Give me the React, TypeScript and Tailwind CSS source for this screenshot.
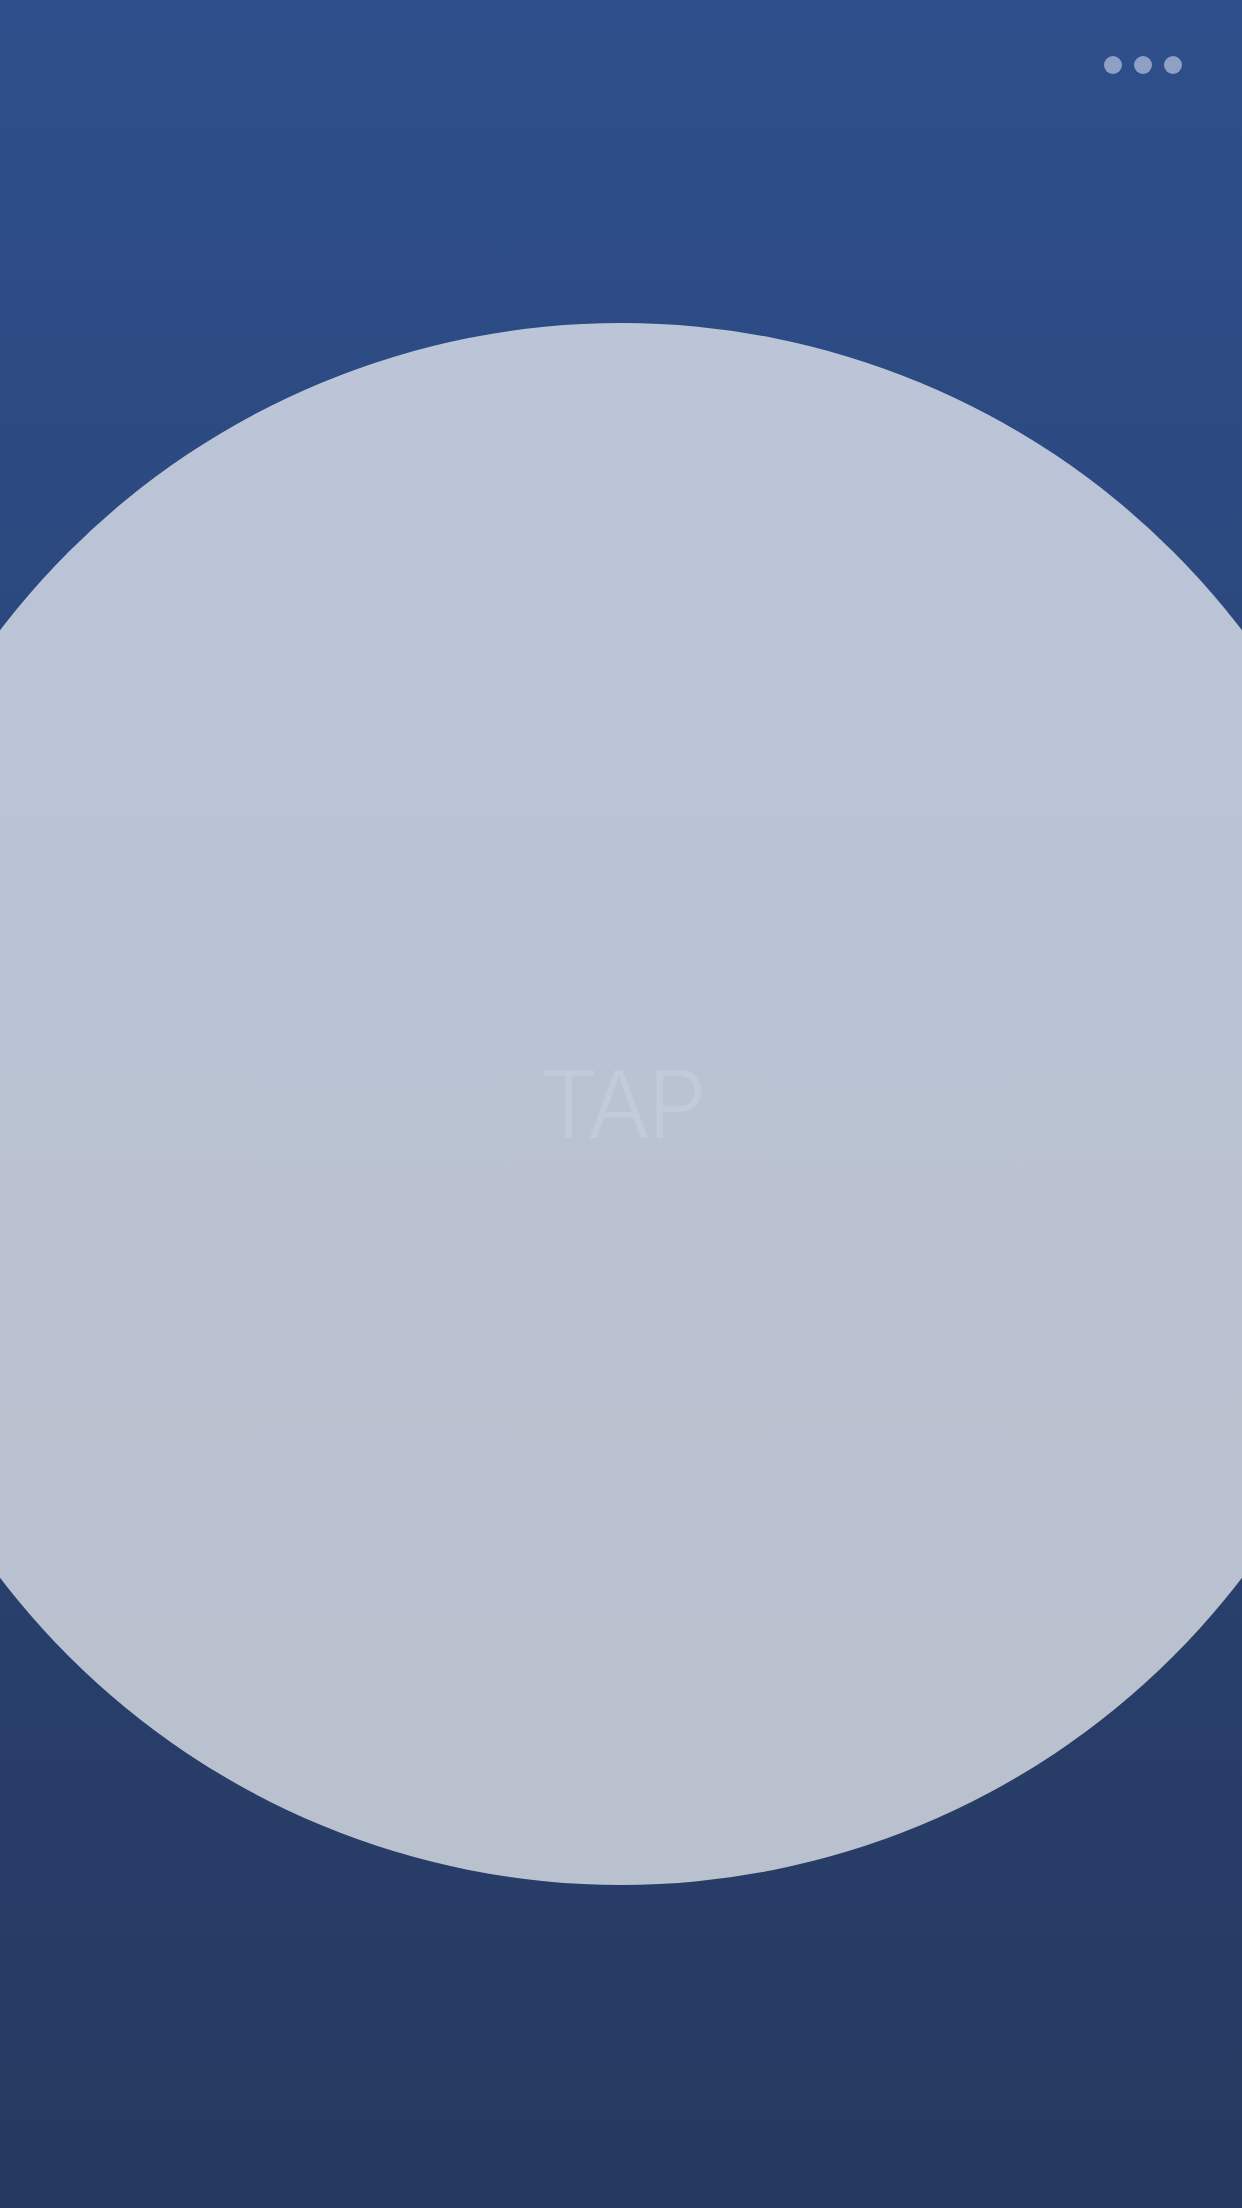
export default function App() {
  return (
    <div className="relative flex h-[2208px] w-full items-center justify-center overflow-hidden bg-gradient-to-b from-[#2e4f8b] to-[#263960]">
      {/* More menu */}
      <div className="absolute right-[60px] top-[56px] flex gap-[12px]">
        <span className="h-[18px] w-[18px] rounded-full bg-[#8fa0c4]" />
        <span className="h-[18px] w-[18px] rounded-full bg-[#8fa0c4]" />
        <span className="h-[18px] w-[18px] rounded-full bg-[#8fa0c4]" />
      </div>

      {/* Tap circle */}
      <button className="flex h-[1562px] w-[1562px] shrink-0 items-center justify-center rounded-full bg-white/[0.68]">
        <span className="font-['Inter',_'Liberation_Sans',_sans-serif] text-[94px] font-light leading-none tracking-[-3px] text-white/[0.13]">
          TAP
        </span>
      </button>
    </div>
  );
}
